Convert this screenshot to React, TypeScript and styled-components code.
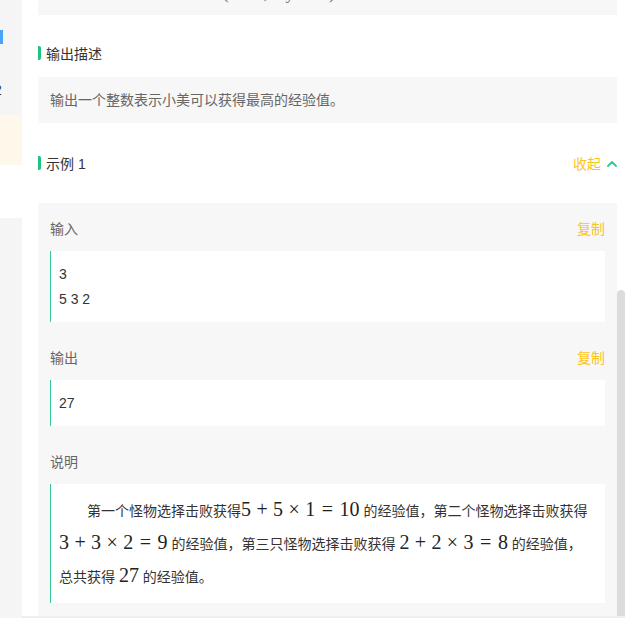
import React from 'react';
import styled, { createGlobalStyle } from 'styled-components';

const GlobalStyle = createGlobalStyle`
  html, body { margin: 0; padding: 0; background: #fff; }
  body {
    font-family: "Liberation Sans", "Noto Sans CJK SC", sans-serif;
    font-size: 14px;
    color: #333;
  }
`;

const Page = styled.div`
  display: flex;
  width: 625px;
  height: 618px;
  overflow: hidden;
`;

const Sidebar = styled.aside`
  flex: 0 0 22px;
  display: flex;
  flex-direction: column;
  overflow: hidden;
`;

const SideBlock = styled.div<{ $h?: number; $bg: string }>`
  flex: ${(p) => (p.$h ? `0 0 ${p.$h}px` : '1 1 auto')};
  background: ${(p) => p.$bg};
  display: flex;
  flex-direction: column;
`;

const ActiveMark = styled.div`
  width: 3px;
  height: 14px;
  margin-top: 30px;
  background: #4aa3f7;
`;

const SideNumber = styled.span`
  margin: 36px 0 0 -6px;
  line-height: 20px;
  font-size: 14px;
  color: #333;
`;

const Main = styled.main`
  flex: 1;
  min-width: 0;
  display: flex;
  flex-direction: column;
`;

const Panel = styled.section`
  display: flex;
  border-bottom: 3px solid #eeeeee;
`;

const Content = styled.div`
  flex: 1;
  min-width: 0;
  padding-left: 16px;
`;

const ScrollTrack = styled.div`
  flex: 0 0 8px;
  display: flex;
  flex-direction: column;
`;

const ScrollThumb = styled.div`
  flex: 1;
  margin-top: 290px;
  background: #dcdcdc;
  border-radius: 4px 4px 0 0;
`;

const Footer = styled.div`
  flex: 1;
  background: #fff;
`;

const TopBox = styled.div`
  height: 15px;
  background: #f7f7f7;
  overflow: hidden;
`;

const TopFormula = styled.div`
  margin-top: -16px;
  padding-left: 185px;
  line-height: 20px;
  font-family: "Liberation Serif", "DejaVu Serif", serif;
  font-size: 17px;
  color: #666;
  white-space: nowrap;
`;

const HeadingRow = styled.div<{ $mt: number }>`
  margin-top: ${(p) => p.$mt}px;
  height: 20px;
  display: flex;
  align-items: center;
  justify-content: space-between;
`;

const HeadingTitle = styled.h3`
  margin: 0;
  display: flex;
  align-items: center;
  font-size: 14px;
  font-weight: normal;
  color: #333;
  &::before {
    content: '';
    width: 3px;
    height: 14px;
    margin-right: 5px;
    border-radius: 0 2px 2px 0;
    background: #1fc27f;
  }
`;

const Toggle = styled.button`
  display: flex;
  align-items: center;
  gap: 6px;
  padding: 0;
  border: none;
  background: transparent;
  font-family: inherit;
  font-size: 14px;
  color: #fcc419;
  cursor: pointer;
`;

const DescBox = styled.div`
  margin-top: 14px;
  padding: 12px;
  line-height: 22px;
  background: #f7f7f7;
  color: #666;
`;

const ExampleBox = styled.div`
  margin-top: 30px;
  padding: 13px 12px;
  background: #f7f7f7;
`;

const LabelRow = styled.div<{ $first?: boolean }>`
  margin: ${(p) => (p.$first ? 0 : 23)}px 0 11px;
  height: 24px;
  display: flex;
  align-items: center;
  justify-content: space-between;
  color: #666;
`;

const CopyButton = styled.button`
  padding: 0;
  border: none;
  background: transparent;
  font-family: inherit;
  font-size: 14px;
  color: #fcc419;
  cursor: pointer;
`;

const CodeBlock = styled.pre`
  margin: 0;
  padding: 11px 8px 10px;
  background: #fff;
  border-left: 1px solid #32ca99;
  font-family: "Liberation Sans", "Noto Sans CJK SC", sans-serif;
  font-size: 14px;
  line-height: 25px;
  color: #333;
`;

const Explain = styled.div`
  padding: 10px 8px;
  background: #fff;
  border-left: 1px solid #32ca99;
  line-height: 31px;
  color: #333;
`;

const ExplainText = styled.p`
  margin: 0;
  text-indent: 2em;
  white-space: nowrap;
`;

const MathText = styled.span`
  font-family: "Liberation Serif", "DejaVu Serif", serif;
  font-size: 20px;
  color: #222;
`;

const Op = styled.span<{ $rel?: boolean }>`
  margin: 0 ${(p) => (p.$rel ? '0.33em' : '0.27em')};
`;

function Formula({ a, b, c, r }: { a: string; b: string; c: string; r: string }) {
  return (
    <MathText>
      {a}
      <Op>+</Op>
      {b}
      <Op>×</Op>
      {c}
      <Op $rel>=</Op>
      {r}
    </MathText>
  );
}

function ChevronUp() {
  return (
    <svg width="10" height="7" viewBox="0 0 10 7" fill="none">
      <polyline points="1,6 5,2 9,6" stroke="#32ca99" strokeWidth="1.8" strokeLinecap="round" strokeLinejoin="round" />
    </svg>
  );
}

export default function App() {
  return (
    <>
      <GlobalStyle />
      <Page>
        <Sidebar>
          <SideBlock $h={115} $bg="#f5f5f5">
            <ActiveMark />
            <SideNumber>2</SideNumber>
          </SideBlock>
          <SideBlock $h={50} $bg="#fdf8ea" />
          <SideBlock $h={53} $bg="#ffffff" />
          <SideBlock $bg="#f5f5f5" />
        </Sidebar>
        <Main>
          <Panel>
            <Content>
              <TopBox>
                <TopFormula>(1 ≤ x, ≤ y ≤ 10)</TopFormula>
              </TopBox>

              <HeadingRow $mt={28}>
                <HeadingTitle>输出描述</HeadingTitle>
              </HeadingRow>
              <DescBox>输出一个整数表示小美可以获得最高的经验值。</DescBox>

              <HeadingRow $mt={30}>
                <HeadingTitle>示例 1</HeadingTitle>
                <Toggle>
                  收起
                  <ChevronUp />
                </Toggle>
              </HeadingRow>

              <ExampleBox>
                <LabelRow $first>
                  <span>输入</span>
                  <CopyButton>复制</CopyButton>
                </LabelRow>
                <CodeBlock>{'3\n5 3 2'}</CodeBlock>

                <LabelRow>
                  <span>输出</span>
                  <CopyButton>复制</CopyButton>
                </LabelRow>
                <CodeBlock>27</CodeBlock>

                <LabelRow>
                  <span>说明</span>
                </LabelRow>
                <Explain>
                  <ExplainText>
                    第一个怪物选择击败获得<Formula a="5" b="5" c="1" r="10" /> 的经验值，第二个怪物选择击败获得
                    <br />
                    <Formula a="3" b="3" c="2" r="9" /> 的经验值，第三只怪物选择击败获得 <Formula a="2" b="2" c="3" r="8" /> 的经验值，
                    <br />
                    总共获得 <MathText>27</MathText> 的经验值。
                  </ExplainText>
                </Explain>
              </ExampleBox>
            </Content>
            <ScrollTrack>
              <ScrollThumb />
            </ScrollTrack>
          </Panel>
          <Footer />
        </Main>
      </Page>
    </>
  );
}
